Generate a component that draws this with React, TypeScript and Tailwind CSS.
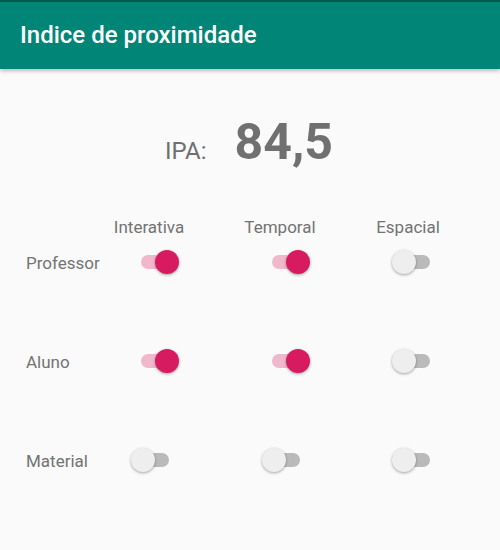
import React from "react";

function Sw({ on, className = "" }: { on: boolean; className?: string }) {
  return (
    <div className={`relative h-[24px] w-[40px] shrink-0 ${className}`}>
      <div
        className={`absolute left-[2px] right-[2px] top-[5px] h-[14px] rounded-full ${
          on ? "bg-[#F1B8CC]" : "bg-[#BABABA]"
        }`}
      />
      <div
        className={`absolute top-0 h-[24px] w-[24px] rounded-full shadow-[0_1px_3px_rgba(0,0,0,0.35)] ${
          on ? "right-0 bg-[#D81B60]" : "left-0 bg-[#EEEEEE]"
        }`}
      />
    </div>
  );
}

export default function App() {
  const font = { fontFamily: "Roboto, 'Noto Sans', sans-serif" };
  return (
    <div className="w-[500px] h-[550px] bg-[#FAFAFA] overflow-hidden text-[#737373]" style={font}>
      <div className="relative z-10 h-[69px] bg-[#008577] border-t-2 border-[#00574B] shadow-[0_2px_4px_rgba(0,0,0,0.25)] flex items-center pl-[20px]">
        <span className="text-white text-[24px] font-medium leading-none mt-[-2px]">Indice de proximidade</span>
      </div>

      <div className="mt-[49px] flex justify-center items-baseline gap-[28px] pr-[2px]">
        <span className="text-[24px] leading-[48px] text-[#707070]">IPA:</span>
        <span className="text-[50px] font-bold leading-[48px] text-[#707070]">84,5</span>
      </div>

      <div className="mt-[42px] flex pl-[99px] text-[17px] leading-[20px]">
        <div className="w-[100px] text-center">Interativa</div>
        <div className="w-[100px] text-center ml-[31px]">Temporal</div>
        <div className="w-[100px] text-center ml-[28px]">Espacial</div>
      </div>

      <div className="mt-[13px] flex flex-col gap-[75px] text-[17px] leading-[20px]">
        <div className="flex items-center pl-[26px] h-[24px]">
          <div className="w-[113px] pt-[1px]">Professor</div>
          <Sw on />
          <Sw on className="ml-[91px]" />
          <Sw on={false} className="ml-[82px]" />
        </div>
        <div className="flex items-center pl-[26px] h-[24px]">
          <div className="w-[113px] pt-[1px]">Aluno</div>
          <Sw on />
          <Sw on className="ml-[91px]" />
          <Sw on={false} className="ml-[82px]" />
        </div>
        <div className="flex items-center pl-[26px] h-[24px]">
          <div className="w-[105px] pt-[1px]">Material</div>
          <Sw on={false} />
          <Sw on={false} className="ml-[91px]" />
          <Sw on={false} className="ml-[90px]" />
        </div>
      </div>
    </div>
  );
}
